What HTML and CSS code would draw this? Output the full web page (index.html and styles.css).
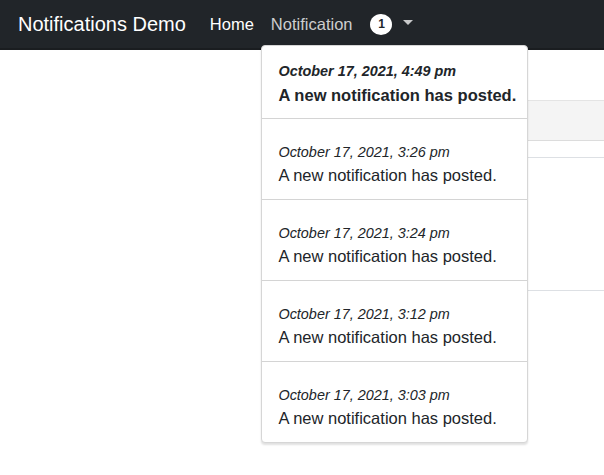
FILE: index.html
```html
<!DOCTYPE html>
<html>
<head>
<meta charset="utf-8">
<link rel="stylesheet" href="styles.css">
</head>
<body>
<nav class="navbar">
  <span class="brand">Notifications Demo</span>
  <a class="nav-link active">Home</a>
  <a class="nav-link">Notification</a>
  <span class="nav-dropdown">
    <span class="badge">1</span>
    <span class="caret"></span>
    <div class="dropdown-menu">
      <div class="item first unread">
        <div class="date">October 17, 2021, 4:49 pm</div>
        <div class="msg">A new notification has posted.</div>
      </div>
      <div class="item">
        <div class="date">October 17, 2021, 3:26 pm</div>
        <div class="msg">A new notification has posted.</div>
      </div>
      <div class="item">
        <div class="date">October 17, 2021, 3:24 pm</div>
        <div class="msg">A new notification has posted.</div>
      </div>
      <div class="item">
        <div class="date">October 17, 2021, 3:12 pm</div>
        <div class="msg">A new notification has posted.</div>
      </div>
      <div class="item">
        <div class="date">October 17, 2021, 3:03 pm</div>
        <div class="msg">A new notification has posted.</div>
      </div>
    </div>
  </span>
</nav>
<main class="content">
  <div class="table">
    <div class="thead"></div>
    <div class="row short"></div>
    <div class="row tall"></div>
  </div>
</main>
</body>
</html>
```
FILE: styles.css
```css
* { box-sizing: border-box; }
html, body { min-height: 100%; height: 100%; }
body {
  margin: 0;
  font-family: "Liberation Sans", Arial, sans-serif;
  color: #212529;
  background: #fff;
}
.navbar {
  height: 50px;
  background: #212529;
  border-bottom: 2px solid #1a1d20;
  display: flex;
  align-items: center;
  padding: 0 0 0 18px;
  position: relative;
  z-index: 5;
}
.brand {
  color: #fff;
  font-size: 20px;
  margin-right: 24px;
}
.nav-link {
  font-size: 16.5px;
  color: rgba(255,255,255,.78);
  margin-right: 17px;
}
.nav-link.active { color: #fff; }
.nav-dropdown {
  position: relative;
  display: flex;
  align-items: center;
  margin-left: 1px;
}
.badge {
  width: 22px;
  height: 21px;
  border-radius: 50%;
  background: #fff;
  color: #212529;
  font-size: 12px;
  font-weight: bold;
  display: flex;
  align-items: center;
  justify-content: center;
}
.caret {
  margin-left: 11px;
  width: 0;
  height: 0;
  border-left: 5px solid transparent;
  border-right: 5px solid transparent;
  border-top: 5px solid #c8c9ca;
  margin-top: -3px;
}
.dropdown-menu {
  position: absolute;
  top: 31px;
  left: -109px;
  width: 267px;
  background: #fff;
  border: 1px solid #d6d6d6;
  border-radius: 4px;
  box-shadow: 0 2px 2px rgba(0,0,0,.12);
}
.item {
  padding: 25px 16px 14px;
  border-top: 1px solid #d4d4d4;
  white-space: nowrap;
}
.item .date { margin-bottom: 5px; }
.item.first {
  border-top: none;
  padding-top: 17px;
  padding-bottom: 13px;
}
.item.first .date { margin-bottom: 6px; }
.date {
  font-size: 14.4px;
  font-style: italic;
  line-height: 17px;
}
.msg {
  font-size: 16.5px;
  line-height: 19px;
}
.unread .date, .unread .msg { font-weight: bold; }
.content {
  padding: 50px 0 0 300px;
}
.thead {
  height: 41px;
  background: #f4f4f4;
  border-top: 1px solid #e4e4e4;
  border-bottom: 1px solid #dcdcdc;
}
.row.short {
  height: 17px;
  border-bottom: 1px solid #dde0e4;
}
.row.tall {
  height: 133px;
  border-bottom: 1px solid #dde0e4;
}
```
